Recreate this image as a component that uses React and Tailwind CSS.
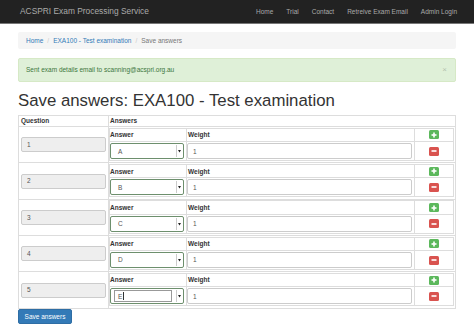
const navLinks = ["Home", "Trial", "Contact", "Retreive Exam Email", "Admin Login"];
const questions = [
  { num: 1, answer: "A" },
  { num: 2, answer: "B" },
  { num: 3, answer: "C" },
  { num: 4, answer: "D" },
  { num: 5, answer: "E", focused: true },
];

const PlusIcon = () => (
  <svg width="6" height="6" viewBox="0 0 6 6">
    <rect x="2.2" y="0.5" width="1.6" height="5" fill="#fff" />
    <rect x="0.5" y="2.2" width="5" height="1.6" fill="#fff" />
  </svg>
);

const MinusIcon = () => (
  <svg width="6" height="6" viewBox="0 0 6 6">
    <rect x="0.5" y="2.2" width="5" height="1.6" fill="#fff" />
  </svg>
);

const AnswerSelect = ({ value, focused }) => (
  <div className="w-[74px] h-[16px] border border-[#6d8f6d] rounded-[2px] bg-white flex items-center">
    {focused ? (
      <div className="ml-[3px] w-[58px] h-[12px] border border-[#999] flex items-center pl-[3px] text-[#555]">
        {value}
        <span className="ml-[1px] w-px h-[8px] bg-[#333]" />
      </div>
    ) : (
      <span className="pl-[7px] text-[#555]">{value}</span>
    )}
    <div className="ml-auto mr-[1px] w-[6px] h-[12px] border-l border-[#ccc] flex items-center justify-center">
      <svg width="3" height="4" viewBox="0 0 3 4">
        <path d="M0 1 L3 1 L1.5 3.5 Z" fill="#222" />
      </svg>
    </div>
  </div>
);

const QuestionRow = ({ q }) => (
  <div className="grid grid-cols-[89px_1fr] h-[36.3px] border-t border-[#ddd]">
    <div className="flex items-center px-[2px]">
      <div className="w-[85px] h-[15px] bg-[#eee] border border-[#ccc] rounded-[2px] pl-[5px] flex items-center text-[#555]">
        {q.num}
      </div>
    </div>
    <div className="border-l border-[#ddd] pr-[1px] pt-[0.5px]">
      <div className="border border-[#ddd] grid grid-cols-[76px_228px_1fr]">
        <div className="h-[12.5px] flex items-center font-bold">Answer</div>
        <div className="h-[12.5px] pl-[1px] flex items-center font-bold border-l border-[#ddd]">Weight</div>
        <div className="h-[12.5px] flex items-center justify-center border-l border-[#ddd]">
          <div className="w-[10px] h-[9px] rounded-[1.5px] bg-[#5cb85c] flex items-center justify-center">
            <PlusIcon />
          </div>
        </div>
        <div className="h-[19px] flex items-center border-t border-[#ddd]">
          <AnswerSelect value={q.answer} focused={q.focused} />
        </div>
        <div className="h-[19px] flex items-center border-t border-l border-[#ddd]">
          <div className="w-[225px] h-[16px] border border-[#ccc] rounded-[2px] bg-white pl-[5px] flex items-center text-[#555]">
            1
          </div>
        </div>
        <div className="h-[19px] flex items-center justify-center border-t border-l border-[#ddd]">
          <div className="w-[10px] h-[9px] rounded-[1.5px] bg-[#d9534f] flex items-center justify-center">
            <MinusIcon />
          </div>
        </div>
      </div>
    </div>
  </div>
);

export default function App() {
  return (
    <div className="min-h-screen bg-white font-['Liberation_Sans',Arial,sans-serif] text-[6.5px] leading-[1.43] text-[#333]">
      <nav className="h-[24px] bg-[#222] border-b border-[#777]">
        <div className="w-[438px] mx-auto h-full flex items-center">
          <span className="pl-[2px] text-[8.4px] text-[#aaa]">ACSPRI Exam Processing Service</span>
          <ul className="ml-auto flex gap-[13px] text-[#aaa] -mr-[1px]">
            {navLinks.map((link) => (
              <li key={link}>{link}</li>
            ))}
          </ul>
        </div>
      </nav>

      <div className="w-[438px] mx-auto">
        <div className="mt-[8px] h-[17px] bg-[#f5f5f5] rounded-[2px] px-[8px] flex items-center gap-[4px]">
          <span className="text-[#337ab7]">Home</span>
          <span className="text-[#ccc]">/</span>
          <span className="text-[#337ab7]">EXA100 - Test examination</span>
          <span className="text-[#ccc]">/</span>
          <span className="text-[#777]">Save answers</span>
        </div>

        <div className="mt-[9px] h-[24px] bg-[#dff0d8] border border-[#d6e9c6] rounded-[2px] pl-[7px] pr-[8px] flex items-center text-[#3c763d]">
          <span>Sent exam details email to scanning@acspri.org.au</span>
          <span className="ml-auto text-[8px] text-[#000] opacity-20">×</span>
        </div>

        <h1 className="mt-[9.5px] text-[16.8px] leading-[18.5px] font-normal text-[#333]">
          Save answers: EXA100 - Test examination
        </h1>

        <div className="mt-[4.7px] border border-[#ddd]">
          <div className="grid grid-cols-[89px_1fr] h-[10.5px] font-bold">
            <div className="pl-[2px] flex items-center">Question</div>
            <div className="pl-[1px] flex items-center border-l border-[#ddd]">Answers</div>
          </div>
          {questions.map((q) => (
            <QuestionRow key={q.num} q={q} />
          ))}
        </div>

        <button className="mt-[0.3px] w-[54px] h-[15px] bg-[#337ab7] border border-[#2e6da4] rounded-[2px] text-white text-[6.5px] flex items-center justify-center">
          Save answers
        </button>
      </div>
    </div>
  );
}
